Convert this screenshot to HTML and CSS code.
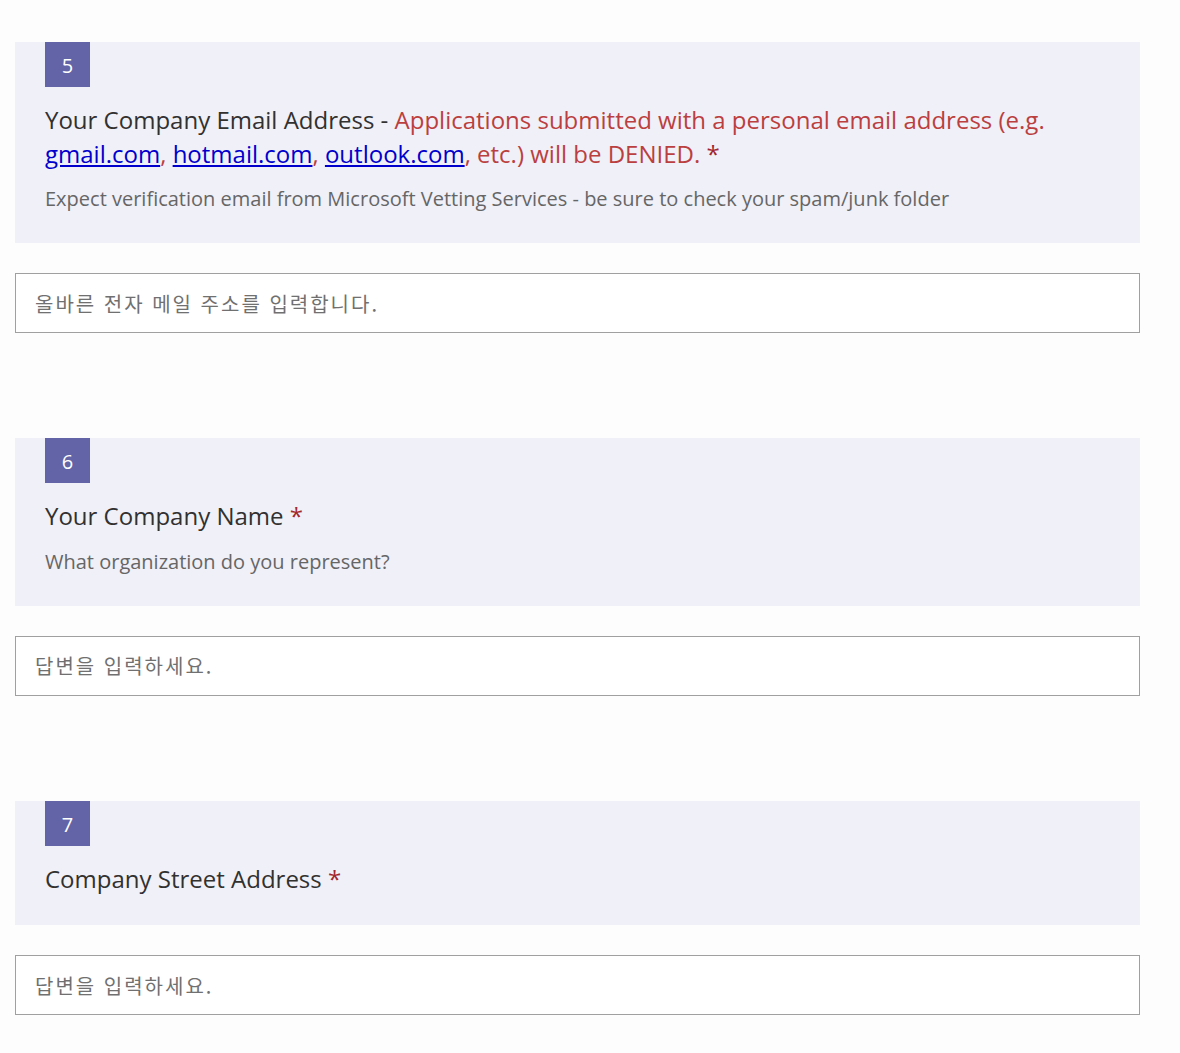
FILE: index.html
```html
<!DOCTYPE html>
<html lang="ko">
<head>
<meta charset="utf-8">
<link rel="stylesheet" href="styles.css">
</head>
<body>
<main class="form">
  <div class="question">
    <section class="q-head">
      <div class="badge">5</div>
      <div class="title">Your Company Email Address - <span class="warn">Applications submitted with a personal email address (e.g. <a href="#">gmail.com</a>, <a href="#">hotmail.com</a>, <a href="#">outlook.com</a>, etc.) will be DENIED.</span> <span class="req">*</span></div>
      <div class="desc">Expect verification email from Microsoft Vetting Services - be sure to check your spam/junk folder</div>
    </section>
    <input class="answer" type="text" placeholder="올바른 전자 메일 주소를 입력합니다.">
  </div>
  <div class="question">
    <section class="q-head">
      <div class="badge">6</div>
      <div class="title">Your Company Name <span class="req">*</span></div>
      <div class="desc">What organization do you represent?</div>
    </section>
    <input class="answer" type="text" placeholder="답변을 입력하세요.">
  </div>
  <div class="question">
    <section class="q-head">
      <div class="badge">7</div>
      <div class="title">Company Street Address <span class="req">*</span></div>
    </section>
    <input class="answer" type="text" placeholder="답변을 입력하세요.">
  </div>
</main>
</body>
</html>
```
FILE: styles.css
```css
html, body {
  margin: 0;
  padding: 0;
  background: #fdfdfe;
}
body {
  font-family: "Open Sans", "Noto Sans", "Noto Sans CJK KR", sans-serif;
  color: #323130;
}
.form {
  width: 1125px;
  padding: 42px 0 0 15px;
  display: flex;
  flex-direction: column;
  gap: 105px;
}
.question {
  display: flex;
  flex-direction: column;
  gap: 30px;
}
.q-head {
  background: #f0f0f8;
  padding: 0 30px 30px 30px;
}
.badge {
  width: 45px;
  height: 45px;
  background: #6264a7;
  color: #fff;
  font-size: 20px;
  line-height: 47px;
  text-align: center;
}
.title {
  margin-top: 16px;
  font-size: 24px;
  line-height: 33.5px;
  color: #323130;
}
.warn {
  color: #bb3f3f;
}
.warn a {
  color: #0000cc;
  text-decoration: underline;
}
.req {
  color: #a4262c;
}
.desc {
  margin-top: 14px;
  font-size: 20px;
  line-height: 29px;
  color: #666;
}
.answer {
  box-sizing: border-box;
  width: 100%;
  height: 60px;
  margin: 0;
  border: 1px solid #a0a0a0;
  padding: 0 19px;
  background: #fff;
  font-family: "Noto Sans CJK KR", "Open Sans", sans-serif;
  font-size: 20px;
  letter-spacing: 2px;
  color: #323130;
  outline: none;
}
.answer::placeholder {
  color: #707070;
  opacity: 1;
}
```
